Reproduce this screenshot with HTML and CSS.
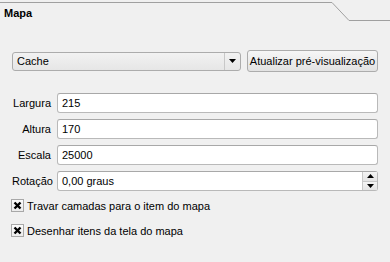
FILE: index.html
```html
<!DOCTYPE html>
<html lang="pt">
<head>
    <meta charset="UTF-8">
    <title>Mapa</title>
    <link rel="stylesheet" href="styles.css">
</head>
<body>
    <div class="tab-header">
        <div class="tab-label">Mapa</div>
        <svg class="tab-slope" width="17" height="21" viewBox="0 0 17 21">
            <polyline points="0,2.5 17,20.5" fill="none" stroke="#a0a0a0" stroke-width="1"/>
        </svg>
        <div class="tab-line"></div>
    </div>

    <div class="panel">
        <div class="preview-row">
            <div class="combo">
                <span class="combo-text">Cache</span>
                <span class="combo-arrow">
                    <svg width="7" height="4" viewBox="0 0 7 4"><polygon points="0,0 7,0 3.5,4" fill="#000"/></svg>
                </span>
            </div>
            <button class="push-btn">Atualizar pré-visualização</button>
        </div>

        <div class="form-grid">
            <label class="field-label">Largura</label>
            <div class="line-edit">215</div>

            <label class="field-label">Altura</label>
            <div class="line-edit">170</div>

            <label class="field-label">Escala</label>
            <div class="line-edit">25000</div>

            <label class="field-label">Rotação</label>
            <div class="line-edit spin">
                <span class="spin-text">0,00 graus</span>
                <span class="spin-buttons">
                    <span class="spin-btn">
                        <svg width="7" height="4" viewBox="0 0 7 4"><polygon points="3.5,0 7,4 0,4" fill="#000"/></svg>
                    </span>
                    <span class="spin-btn">
                        <svg width="7" height="4" viewBox="0 0 7 4"><polygon points="0,0 7,0 3.5,4" fill="#000"/></svg>
                    </span>
                </span>
            </div>
        </div>

        <div class="check-list">
            <div class="check-row">
                <span class="check-box">
                    <svg width="9" height="9" viewBox="0 0 9 9"><path d="M1.5 1.5 L7.5 7.5 M7.5 1.5 L1.5 7.5" stroke="#000" stroke-width="2.4"/></svg>
                </span>
                <span>Travar camadas para o item do mapa</span>
            </div>
            <div class="check-row">
                <span class="check-box">
                    <svg width="9" height="9" viewBox="0 0 9 9"><path d="M1.5 1.5 L7.5 7.5 M7.5 1.5 L1.5 7.5" stroke="#000" stroke-width="2.4"/></svg>
                </span>
                <span>Desenhar itens da tela do mapa</span>
            </div>
        </div>
    </div>
</body>
</html>
```

FILE: styles.css
```css
body {
    margin: 0;
    background: #f0f0f0;
    font-family: "Liberation Sans", Arial, sans-serif;
    font-size: 11px;
    color: #000;
    width: 390px;
    height: 262px;
    overflow: hidden;
}
.tab-header {
    display: flex;
    height: 21px;
}
.tab-label {
    width: 328px;
    margin-top: 2px;
    padding: 4px 0 0 4px;
    border-top: 1px solid #a0a0a0;
    font-weight: bold;
    line-height: 13px;
}
.tab-slope {
    display: block;
    flex: 0 0 17px;
}
.tab-line {
    flex: 1;
    height: 20px;
    border-bottom: 1px solid #a0a0a0;
}
.panel {
    padding: 29px 12px 0 12px;
}
.preview-row {
    display: flex;
    align-items: center;
    gap: 6px;
    height: 22px;
}
.combo {
    width: 229px;
    height: 19px;
    box-sizing: border-box;
    display: flex;
    align-items: center;
    border: 1px solid #acacac;
    border-radius: 3px;
    background: linear-gradient(#f2f2f2, #e6e6e6);
}
.combo-text {
    flex: 1;
    padding-left: 4px;
}
.combo-arrow {
    width: 15px;
    height: 100%;
    display: flex;
    align-items: center;
    justify-content: center;
    border-left: 1px solid #c8c8c8;
}
.push-btn {
    width: 131px;
    height: 22px;
    padding: 0;
    font-family: inherit;
    font-size: 11px;
    color: #000;
    border: 1px solid #acacac;
    border-radius: 3px;
    background: linear-gradient(#f6f6f6, #e2e2e2);
}
.form-grid {
    display: grid;
    grid-template-columns: 39px 1fr;
    column-gap: 6px;
    row-gap: 6px;
    margin-top: 21px;
}
.field-label {
    text-align: right;
    line-height: 20px;
}
.line-edit {
    height: 20px;
    box-sizing: border-box;
    padding-left: 4px;
    line-height: 18px;
    background: #fff;
    border: 1px solid #b9b9b9;
    border-top-color: #a8a8a8;
    border-radius: 3px;
}
.spin {
    display: flex;
    padding-left: 0;
}
.spin-text {
    flex: 1;
    padding-left: 4px;
}
.spin-buttons {
    width: 15px;
    display: flex;
    flex-direction: column;
}
.spin-btn {
    flex: 1;
    display: flex;
    align-items: center;
    justify-content: center;
    border-left: 1px solid #c8c8c8;
    background: linear-gradient(#f4f4f4, #e4e4e4);
}
.spin-btn + .spin-btn {
    border-top: 1px solid #c8c8c8;
}
.check-list {
    display: flex;
    flex-direction: column;
    gap: 12px;
    margin-top: 8px;
    margin-left: -1px;
}
.check-row {
    display: flex;
    align-items: center;
    gap: 3px;
    height: 13px;
}
.check-box {
    width: 13px;
    height: 13px;
    box-sizing: border-box;
    display: flex;
    align-items: center;
    justify-content: center;
    border: 1px solid #a8a8a8;
    background: linear-gradient(#fcfcfc, #ececec);
}
```
